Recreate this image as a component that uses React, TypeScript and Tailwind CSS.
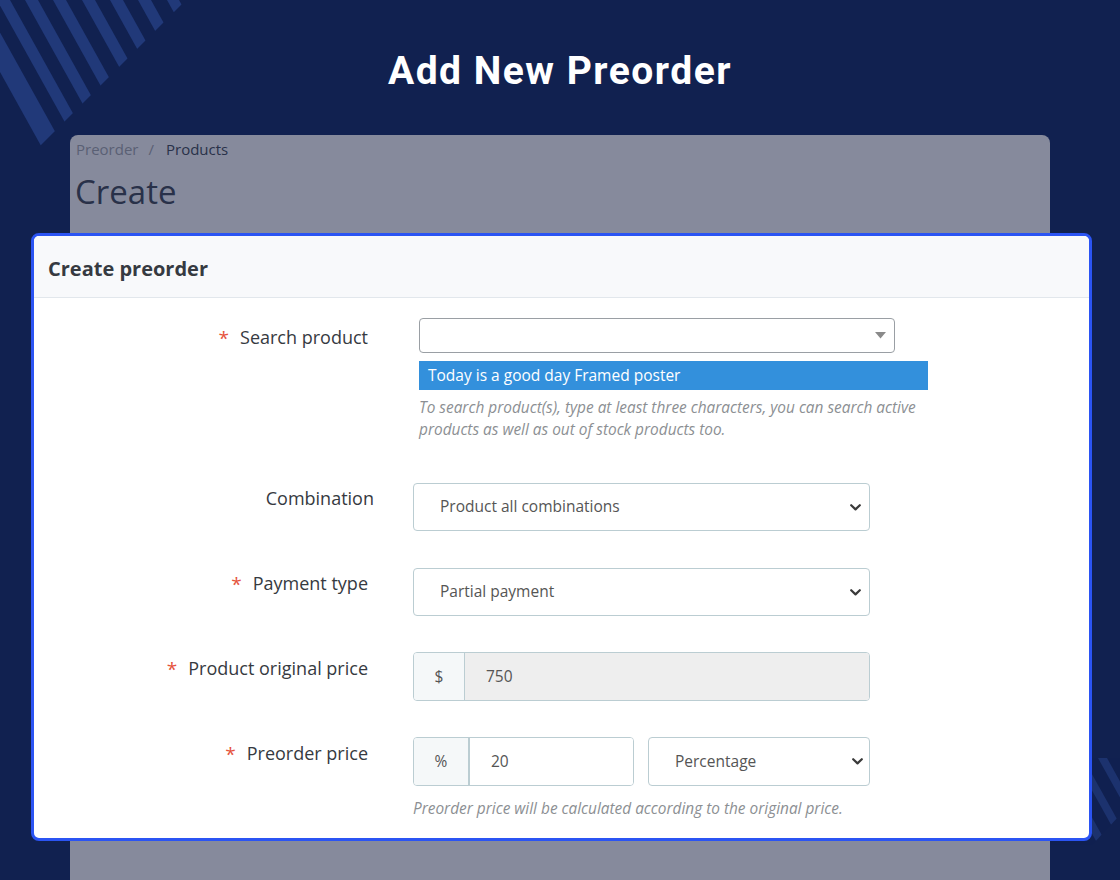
import React from "react";

const sans = { fontFamily: '"Open Sans", "Liberation Sans", sans-serif' };

function CornerStripes() {
  // diagonal band pattern in the top-left corner
  const bands: [number, number][] = [
    [-40, 22],
    [-3, 13],
    [25, 13],
    [53, 13],
    [82, 13],
    [110, 13],
    [138, 13],
    [167, 12],
  ];
  const slope = 1.8;
  const H = 220;
  return (
    <svg width="200" height="200" viewBox="0 0 200 200" className="absolute left-0 top-0">
      <defs>
        <clipPath id="tlClip">
          <polygon points="0,0 186,0 0,186" />
        </clipPath>
      </defs>
      <g clipPath="url(#tlClip)" fill="#213979">
        {bands.map(([a, w]) => {
          const dx = H / slope;
          return (
            <polygon
              key={a}
              points={`${a},0 ${a + w},0 ${a + w + dx},${H} ${a + dx},${H}`}
            />
          );
        })}
      </g>
    </svg>
  );
}

function SideStripes() {
  const starts = [1040, 1064, 1088, 1112];
  const slope = 1.8;
  return (
    <svg width="70" height="100" viewBox="1050 750 70 100" className="absolute right-0 top-[750px]">
      <defs>
        <clipPath id="brClip">
          <polygon points="1050,758 1120,758 1120,815 1092,845 1050,845" />
        </clipPath>
      </defs>
      <g clipPath="url(#brClip)" fill="#213979" opacity="0.75">
        {starts.map((a) => {
          const y0 = 740;
          const dx = 120 / slope;
          return (
            <polygon
              key={a}
              points={`${a},${y0} ${a + 9},${y0} ${a + 9 + dx},${y0 + 120} ${a + dx},${y0 + 120}`}
            />
          );
        })}
      </g>
    </svg>
  );
}

function Chevron() {
  return (
    <svg width="11" height="7" viewBox="0 0 11 7" className="shrink-0">
      <path d="M1.2 1.2 L5.5 5.4 L9.8 1.2" fill="none" stroke="#3a3a3a" strokeWidth="2.2" strokeLinecap="round" strokeLinejoin="round" />
    </svg>
  );
}

function SelectBox({ value, width }: { value: string; width: string }) {
  return (
    <div
      className={`${width} h-[48px] flex items-center justify-between pl-[26px] pr-[8px] border border-[#bbcdd2] rounded-[4px] bg-white text-[15.5px] text-[#555555]`}
    >
      <span>{value}</span>
      <Chevron />
    </div>
  );
}

function Label({ text, required = true, offset = "" }: { text: string; required?: boolean; offset?: string }) {
  return (
    <div className={`w-[334px] shrink-0 flex justify-end items-center gap-[11px] text-[18px] text-[#363a41] ${offset}`}>
      {required && <span className="text-[#e5533d] text-[19px] leading-none translate-y-[1px]">*</span>}
      <span>{text}</span>
    </div>
  );
}

export default function App() {
  return (
    <div className="relative w-[1120px] h-[880px] overflow-hidden bg-[#112150]" style={sans}>
      <CornerStripes />
      <SideStripes />

      <h1
        className="relative text-center text-white text-[39px] font-bold leading-none pt-[52px] tracking-[1.5px]"
        style={{ fontFamily: 'Roboto, "Liberation Sans", sans-serif' }}
      >
        Add New Preorder
      </h1>

      <div className="relative mt-[44px] ml-[70px] w-[980px] h-[760px] rounded-t-[8px] bg-[#868a9c]">
        <div className="pl-[6px] pt-[5px] flex items-center text-[15px] leading-[18px]">
          <span className="text-[#5a6074]">Preorder</span>
          <span className="text-[#5a6074] mx-[10px]">/</span>
          <span className="ml-[2px] text-[#293149]">Products</span>
        </div>
        <div className="pl-[5px] mt-[12px] text-[33px] leading-[44px] text-[#293149]">Create</div>

        <div className="mt-[19px] ml-[-39px] mr-[-42px] h-[608px] bg-white border-[3px] border-[#2b54f3] rounded-[8px] overflow-hidden">
          <div className="h-[62px] bg-[#f8f9fb] border-b border-[#e2e7ec] flex items-center pl-[14px]">
            <span className="text-[20px] font-bold text-[#363a41] translate-y-[2px]">Create preorder</span>
          </div>

          {/* search product */}
          <div className="flex pt-[20px]">
            <Label text="Search product" offset="h-[39px]" />
            <div className="ml-[51px] w-[509px]">
              <div className="w-[476px] h-[35px] border border-[#9a9fa4] rounded-[4px] bg-white flex items-center justify-end pr-[8px]">
                <svg width="11" height="7" viewBox="0 0 11 7">
                  <polygon points="0,0 11,0 5.5,6.5" fill="#8a8a8a" />
                </svg>
              </div>
              <div className="mt-[8px] h-[29px] bg-[#3390dc] text-white text-[15.5px] flex items-center pl-[9px]">
                Today is a good day Framed poster
              </div>
              <p className="mt-[7px] text-[15.4px] leading-[22px] italic text-[#8c8f93] w-[520px]">
                To search product(s), type at least three characters, you can search active products as well as out of stock products too.
              </p>
            </div>
          </div>

          {/* combination */}
          <div className="flex mt-[42px]">
            <Label text="Combination" required={false} offset="h-[30px] translate-x-[6px]" />
            <div className="ml-[45px]">
              <SelectBox value="Product all combinations" width="w-[457px]" />
            </div>
          </div>

          {/* payment type */}
          <div className="flex mt-[37px]">
            <Label text="Payment type" offset="h-[30px]" />
            <div className="ml-[45px]">
              <SelectBox value="Partial payment" width="w-[457px]" />
            </div>
          </div>

          {/* original price */}
          <div className="flex mt-[36px]">
            <Label text="Product original price" offset="h-[32px]" />
            <div className="ml-[45px] w-[457px] h-[49px] flex border border-[#bbcdd2] rounded-[4px] overflow-hidden text-[15.5px] text-[#555555]">
              <div className="w-[51px] shrink-0 bg-[#f5f8f9] border-r border-[#bbcdd2] flex items-center justify-center">$</div>
              <div className="flex-1 bg-[#eeeeee] flex items-center pl-[21px]">750</div>
            </div>
          </div>

          {/* preorder price */}
          <div className="flex mt-[36px]">
            <Label text="Preorder price" offset="h-[32px]" />
            <div className="ml-[45px]">
              <div className="flex gap-[14px]">
                <div className="w-[221px] h-[49px] flex border border-[#bbcdd2] rounded-[4px] overflow-hidden text-[15.5px] text-[#555555]">
                  <div className="w-[56px] shrink-0 bg-[#f5f8f9] border-r-2 border-[#bbcdd2] flex items-center justify-center">%</div>
                  <div className="flex-1 bg-white flex items-center pl-[21px]">20</div>
                </div>
                <div className="w-[222px] h-[49px] flex items-center justify-between pl-[26px] pr-[6px] border border-[#bbcdd2] rounded-[4px] bg-white text-[15.5px] text-[#555555]">
                  <span>Percentage</span>
                  <Chevron />
                </div>
              </div>
              <p className="mt-[11px] text-[15.4px] italic text-[#8c8f93] whitespace-nowrap">
                Preorder price will be calculated according to the original price.
              </p>
            </div>
          </div>
        </div>
      </div>
    </div>
  );
}
